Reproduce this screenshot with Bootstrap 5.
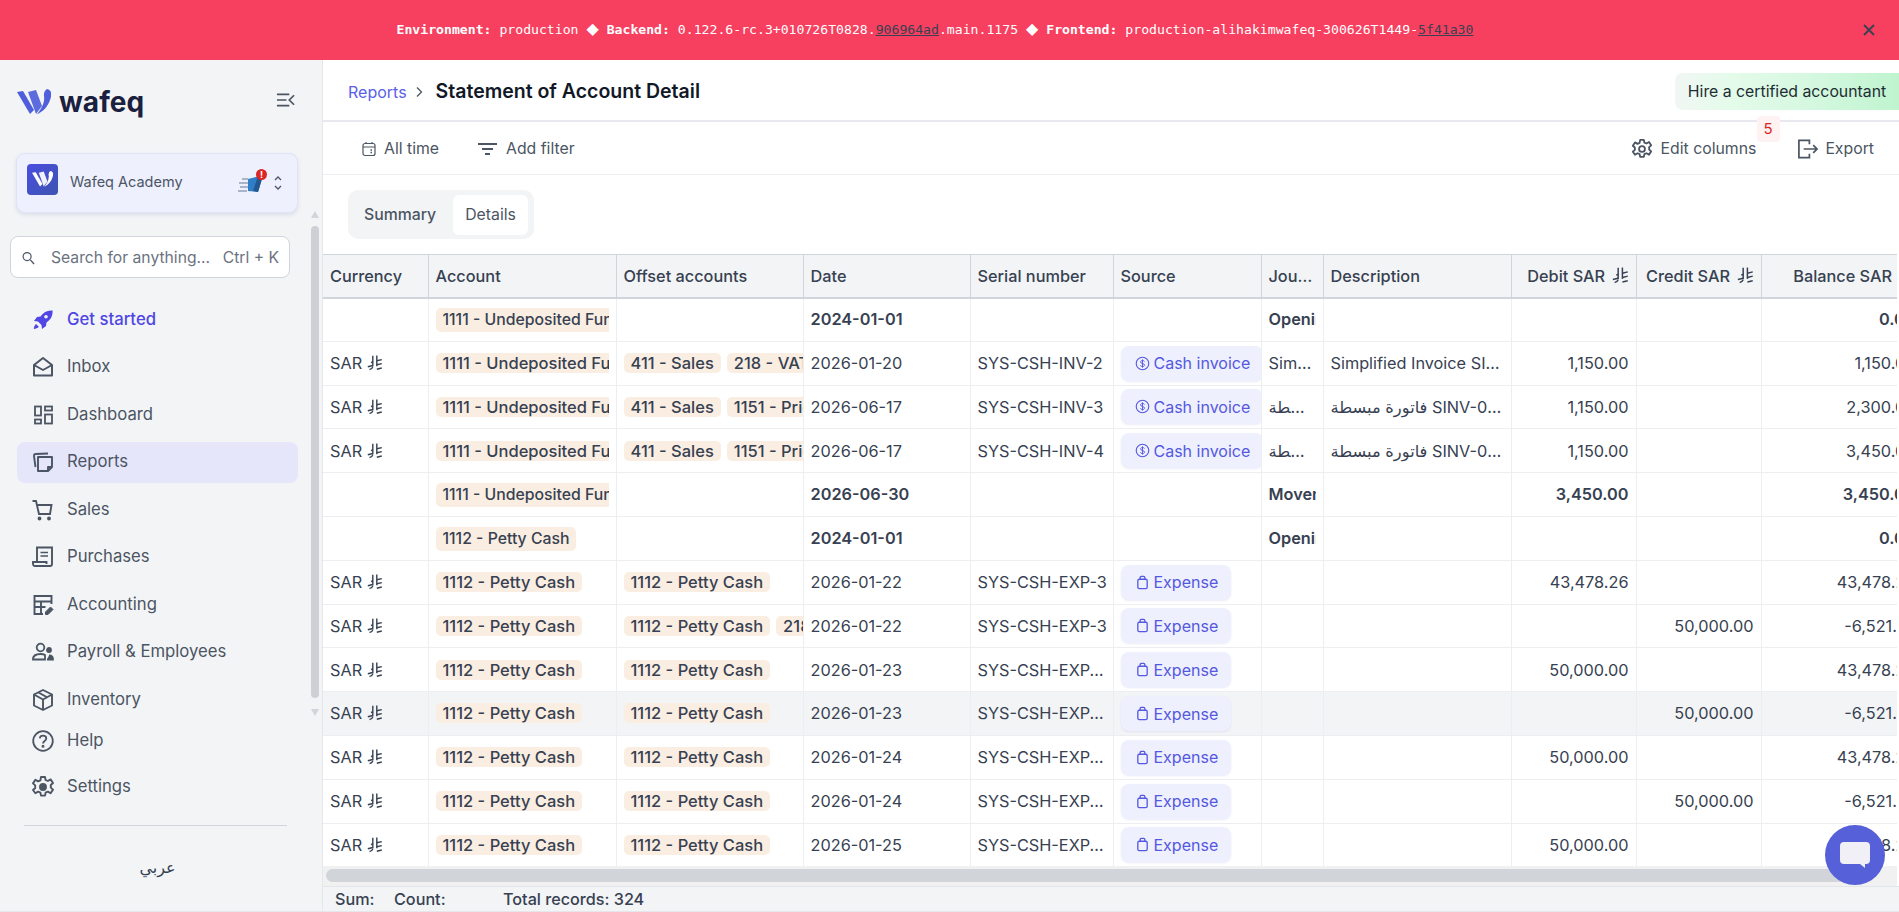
<!DOCTYPE html>
<html lang="en">
<head>
  <meta charset="UTF-8">
  <meta name="viewport" content="width=device-width, initial-scale=1.0">
  <title>Statement of Account Detail - wafeq</title>
  <link href="https://cdn.jsdelivr.net/npm/bootstrap@5.3.3/dist/css/bootstrap.min.css" rel="stylesheet" />
  <style>
    html, body { height: 100%; overflow: hidden; }
    body { font-family: Inter, "DejaVu Sans", sans-serif; color: #374151; background: #fff; }
    .env-bar { height: 60px; padding-right: 29px; background: #f74060; color: #fff; font-family: "DejaVu Sans Mono", monospace; font-size: 13.15px; flex-shrink: 0; }
    .env-bar a { color: #374151; }
    .env-gem { font-family: "DejaVu Sans", sans-serif; font-size: 16px; line-height: 1; }
    .env-close { right: 24px; top: 24px; }
    .shell { height: 852px; }
    .side { width: 323px; flex-shrink: 0; background: #f3f4f6; border-right: 1px solid #e5e7eb; border-bottom: 1px solid #e5e7eb; }
    .brand { height: 93px; padding: 24px 27px 0 17px; }
    .brand-name { font-size: 28px; font-weight: 700; color: #1a2040; line-height: 36px; letter-spacing: .1px; }
    .org-card { width: 282px; height: 60px; margin-left: 16px; background: #eef0fe; border: 1px solid #dfe3f7; border-radius: 9px; box-shadow: 0 2px 4px rgba(60, 70, 160, .12); padding: 0 14px 0 10px; font-size: 14.5px; color: #4b5563; }
    .org-name { margin-top: -2px; }
    .org-logo { width: 31px; height: 31px; margin-top: -8px; border-radius: 4px; background: linear-gradient(135deg, #4a4de0, #3d55b0); margin-right: 12px; }
    .org-bird { margin-right: 9px; }
    .org-alert { width: 11px; height: 11px; right: -3px; top: -3px; background: #dc2626; color: #fff; font-size: 9px; line-height: 11px; font-weight: 700; }
    .search-box { width: 280px; height: 42px; margin: 23px 0 0 10px; padding: 1px 10px 0 11px; background: #fff; border: 1px solid #d1d5db; border-radius: 8px; font-size: 15.7px; color: #6b7280; }
    .side-nav { margin: 21px 0 0 17px; width: 281px; }
    .side-link { height: 41px; margin-bottom: 6.5px; padding-left: 14px; border-radius: 8px; color: #4b5563; font-size: 16.7px; text-decoration: none; gap: 12px; }
    .side-link svg { width: 24px; height: 24px; flex-shrink: 0; }
    .side-link.is-start { color: #4f46e5; font-weight: 500; }
    .side-link.is-active { background: #e6e6fb; }
    .side-link.is-help { margin-top: -6.5px; margin-bottom: 5px; }
    .side-rule { margin: 18px 0 0 7px; width: 263px; border-top: 1px solid #d1d5db; opacity: 1; }
    .lang-link { margin-top: 29px; width: 281px; font-size: 16px; color: #374151; }
    .fake-scroll { right: 3px; top: 151px; width: 8px; }
    .fake-thumb { height: 472px; width: 8px; background: #cdd0d5; border-radius: 4px; }
    .tri-up { border-left: 4px solid transparent; border-right: 4px solid transparent; border-bottom: 7px solid #d1d5db; margin-bottom: 8px; }
    .tri-down { border-left: 4px solid transparent; border-right: 4px solid transparent; border-top: 7px solid #d1d5db; margin-top: 11px; }
    .main-col { min-width: 0; }
    .top-row { height: 62px; padding-left: 25px; border-bottom: 2px solid #e8e9f0; flex-shrink: 0; }
    .crumb-group { padding-top: 4px; }
    .crumb { color: #5b5fe8; font-size: 16px; text-decoration: none; }
    .page-title { font-size: 19.5px; font-weight: 600; color: #111827; margin: 0 0 0 5px; }
    .hire-btn { height: 37px; width: 224px; margin-top: 3px; border-radius: 8px 0 0 8px; background: linear-gradient(90deg, #f1f7f3, #e4fbea 25%, #d5f8e0 60%, #bff4cf); color: #1f2d33; font-size: 15.8px; }
    .tool-row { height: 53px; padding: 2px 25px 0 39px; border-bottom: 1px solid #eceef1; flex-shrink: 0; font-size: 15.8px; color: #4b5563; }
    .tool-row svg { flex-shrink: 0; }
    .tool-filter { margin: 0 9px 0 39px; }
    .tool-gear { margin-right: 8px; }
    .tool-export { margin: 0 7px 0 41px; }
    .col-count { top: -21px; left: 96px; width: 23px; height: 26px; background: #fef2f2; color: #dc2626; border-radius: 4px; font-size: 15px; }
    .tab-wrap { padding: 15px 0 15px 25px; flex-shrink: 0; }
    .seg { height: 49px; width: 186px; background: #f3f4f6; border-radius: 10px; padding: 5px 5px 4px 5px; font-size: 15.8px; color: #4b5563; font-weight: 500; }
    .seg span { padding: 0 11px; line-height: 40px; }
    .seg .seg-on { background: #fff; border-radius: 6px; padding: 0 12px; margin-left: 6px; font-weight: 400; }
    .grid-wrap { flex: 1 1 0; min-height: 0; overflow: hidden; margin-right: 2px; border-top: 1px solid #d1d5db; }
    .ledger { table-layout: fixed; width: 1600px; margin: 0; font-size: 16.3px; color: #374151; border-collapse: collapse; }
    .ledger th, .ledger td { height: 43.8px; padding: 0 7px; border: 0; border-right: 1px solid #eceef1; border-bottom: 1px solid #eceef1; white-space: nowrap; overflow: hidden; text-overflow: ellipsis; vertical-align: middle; color: #374151; background: transparent; box-shadow: none; }
    .ledger th { height: 42.5px; background: #f3f4f6; font-weight: 500; border-right-color: #d1d5db; border-bottom: 2px solid #d1d5db; }
    .ledger .clip { text-overflow: clip; }
    .ledger .flush { padding-right: 0; }
    .ledger .src-cell { padding-right: 0; text-overflow: clip; }
    .ledger .jrnl-head { padding-right: 4px; }
    .ledger tr.sum-row td { font-weight: 600; }
    .ledger tr.hovered td { background: #f3f4f6; }
    .ledger .num { text-align: right; }
    .ledger th .riyal { width: 17px; height: 17px; margin-left: 2px; }
    .cell-clip { overflow: hidden; white-space: nowrap; }
    .acct { display: inline-block; background: #faeee3; border-radius: 5px; padding: 0 7px; line-height: 20px; font-size: 16.5px; font-weight: 500; vertical-align: baseline; }
    .ledger .sum-row .acct { line-height: 24px; font-size: 15.8px; font-weight: 500; }
    .acct + .acct { margin-left: 6px; }
    .src-tag { display: inline-flex; align-items: center; gap: 4px; height: 35px; padding: 0 13px 0 14px; background: #eef0fe; color: #5558e0; border-radius: 8px; box-shadow: 0 1px 2px rgba(80, 90, 200, .12); vertical-align: middle; font-size: 16px; }
    .src-tag svg { width: 15px; height: 15px; }
    .riyal { width: 16px; height: 16px; vertical-align: -2px; }
    .h-scroll { height: 20px; margin-right: 2px; background: #f1f1f1; padding: 3px; flex-shrink: 0; }
    .h-thumb { height: 13px; background: #d1d4d9; border-radius: 7px; }
    .sum-bar { height: 26px; background: #f3f4f6; border-top: 1px solid #e2e5ea; border-bottom: 1px solid #e5e7eb; padding-left: 12px; font-size: 16.2px; font-weight: 500; color: #374151; flex-shrink: 0; }
    .sum-bar .sum-a { width: 59px; }
    .sum-bar .sum-b { width: 109px; }
    .chat-btn { right: 14px; bottom: 27px; width: 60px; height: 60px; background: #5660d8; }
  </style>
</head>
<body class="d-flex flex-column">

<!-- icons -->
<svg width="0" height="0" class="position-absolute">
  <symbol id="i-riyal" viewBox="0 0 16 16">
    <g fill="none" stroke="currentColor" stroke-width="1.400">
      <path d="M5.800 .8v10.700"/><path d="M9.800 .5v10.700"/><path d="M9.800 5.800l5-1.200"/><path d="M.8 11.800 5.800 10.500"/><path d="M9.800 9.800l5-1.200"/><path d="M2.500 14.500c2-.2 2.700-1 3.300-2.500"/><path d="M9.800 14.200l5-1.200"/><path d="M4 7.500 6 7"/>
    </g>
  </symbol>
  <symbol id="i-expense" viewBox="0 0 16 16">
    <g fill="none" stroke="currentColor" stroke-width="1.400" stroke-linejoin="round">
      <rect x="3" y="4.500" width="10" height="10" rx="1.500"/><path d="M5.500 4.500V2.800C5.500 2 6 1.500 6.800 1.500h2.400c.8 0 1.300.5 1.300 1.300v1.700"/>
    </g>
  </symbol>
  <symbol id="i-cash" viewBox="0 0 16 16">
    <circle cx="8" cy="8" r="6.700" fill="none" stroke="currentColor" stroke-width="1.200"/>
    <path d="M10 6c-.3-.9-1-1.300-2-1.300s-2 .6-2 1.600c0 2.300 4.100 1.100 4.100 3.400 0 1-.9 1.600-2.100 1.600s-1.900-.5-2.200-1.400M8 3.600v8.800" fill="none" stroke="currentColor" stroke-width="1"/>
  </symbol>
  <symbol id="i-mark" viewBox="0 0 34 26">
    <path d="M0 3 6 2 17 21 13 25Z"/><path d="M11 3 19 1 25 17 19 25Z" opacity=".92"/><path d="M30 0C35 1 35 6 33 11 31 17 27 22 20 25.500 25 19 28 13 27 7 26.500 4 28 1 30 0Z"/>
  </symbol>
</svg>

<!-- Env banner -->
<div class="env-bar position-relative d-flex align-items-center justify-content-center">
  <div><b>Environment:</b> production <span class="env-gem">◆</span> <b>Backend:</b> 0.122.6-rc.3+010726T0828.<a href="#">906964ad</a>.main.1175 <span class="env-gem">◆</span> <b>Frontend:</b> production-alihakimwafeq-300626T1449-<a href="#">5f41a30</a></div>
  <svg class="position-absolute env-close" width="12" height="12" viewBox="0 0 12 12"><path d="M1 1l10 10M11 1 1 11" stroke="#374151" stroke-width="1.800"/></svg>
</div>

<div class="shell d-flex">
  <!-- Sidebar -->
  <aside class="side position-relative">
    <div class="brand d-flex align-items-start justify-content-between">
      <div class="d-flex align-items-center" style="gap:8px">
        <svg width="34" height="26" fill="#4f5fdc"><use href="#i-mark"/></svg>
        <span class="brand-name">wafeq</span>
      </div>
      <svg class="mt-2" width="19" height="16" viewBox="0 0 20 16"><path d="M1 2h13M1 8h10M1 14h13M19 3l-5 5 5 5" fill="none" stroke="#4b5563" stroke-width="1.800"/></svg>
    </div>
    <div class="org-card d-flex align-items-center">
      <span class="org-logo d-flex align-items-center justify-content-center">
        <svg width="21" height="16" viewBox="0 0 34 26" fill="#fff"><use href="#i-mark"/></svg>
      </span>
      <span class="org-name flex-grow-1">Wafeq Academy</span>
      <span class="org-bird position-relative d-inline-flex">
        <svg width="26" height="22" viewBox="0 0 26 22"><path d="M10 7l12-3 2 3-4 13-10-1Z" fill="#2f7ec7"/><path d="M20 4l4 3-4 13-5-1Z" fill="#24568f"/><path d="M4 7h6M1 11h9M2 15h8M0 19h9" stroke="#a9b4c9" stroke-width="1.800"/></svg>
        <span class="org-alert position-absolute rounded-circle text-center">!</span>
      </span>
      <svg width="10" height="18" viewBox="0 0 10 18"><path d="M2 6l3-3 3 3M2 12l3 3 3-3" fill="none" stroke="#4b5563" stroke-width="1.300"/></svg>
    </div>
    <div class="search-box d-flex align-items-center">
      <svg class="me-3" width="13" height="14" viewBox="0 0 14 14"><circle cx="5.500" cy="5.500" r="4.300" fill="none" stroke="#4b5563" stroke-width="1.300"/><path d="M9 9l4 4.500" stroke="#4b5563" stroke-width="1.500"/></svg>
      <span class="flex-grow-1">Search for anything...</span>
      <span>Ctrl + K</span>
    </div>
    <nav class="side-nav">
      <a href="#" class="side-link is-start d-flex align-items-center">
        <svg viewBox="0 0 24 24" fill="#4f46e5"><path d="M21.500 2.500c-5-.5-9 1.500-12 6L6 9l-3 4 4 .5L10.500 17l.5 4 4-3 .5-3.500c4.500-3 6.500-7 6-12.500ZM15 10.500a1.800 1.800 0 1 1 0-3.600 1.800 1.800 0 0 1 0 3.600ZM5 16c-1.500 1-2 3-2.200 5 2-.2 4-.7 5-2.200Z"/></svg>
        Get started
      </a>
      <a href="#" class="side-link d-flex align-items-center">
        <svg viewBox="0 0 24 24" fill="none" stroke="#4b5563" stroke-width="2" stroke-linejoin="round"><path d="M3 10v10.500h18V10L12 3Z"/><path d="M3 10l9 5 9-5"/></svg>
        Inbox
      </a>
      <a href="#" class="side-link d-flex align-items-center">
        <svg viewBox="0 0 24 24" fill="none" stroke="#4b5563" stroke-width="1.800"><rect x="4" y="3.500" width="6" height="9"/><rect x="14" y="3.500" width="7" height="4"/><rect x="4" y="16.500" width="6" height="4"/><rect x="14" y="11.500" width="7" height="9"/></svg>
        Dashboard
      </a>
      <a href="#" class="side-link is-active d-flex align-items-center">
        <svg viewBox="0 0 24 24" fill="none" stroke="#4b5563" stroke-width="1.900" stroke-linejoin="round"><path d="M7 7h14v10l-4 4H7Z"/><path d="M17 21v-4h4"/><path d="M4.500 17 3 6c0-1 .5-2 1.500-2L17 3.500"/></svg>
        Reports
      </a>
      <a href="#" class="side-link d-flex align-items-center">
        <svg viewBox="0 0 24 24" fill="none" stroke="#4b5563" stroke-width="1.900"><path d="M1.500 3H5l3 13h11l1.500-9H6"/><circle cx="8.500" cy="20.500" r="1" fill="#4b5563"/><circle cx="18" cy="20.500" r="1" fill="#4b5563"/></svg>
        Sales
      </a>
      <a href="#" class="side-link d-flex align-items-center">
        <svg viewBox="0 0 24 24" fill="none" stroke="#4b5563" stroke-width="1.900"><path d="M6 17V2.500h15V19c0 1-.7 2-2 2H4c-1.300 0-2-1-2-2v-2h13.500v2"/><path d="M9.500 7.500H17M9.500 11H17" stroke-width="1.500"/></svg>
        Purchases
      </a>
      <a href="#" class="side-link d-flex align-items-center">
        <svg viewBox="0 0 24 24" fill="none" stroke="#4b5563" stroke-width="1.900"><path d="M12 21H3.500V3h17v8"/><path d="M3.500 8.500h17M3.500 14h11M10 8.500V21"/><path d="M14.500 21.500v-2.500l5-5 2.500 2.500-5 5Z" fill="#4b5563" stroke-width="1"/></svg>
        Accounting
      </a>
      <a href="#" class="side-link d-flex align-items-center">
        <svg viewBox="0 0 24 24" fill="none" stroke="#4b5563" stroke-width="1.800"><circle cx="9.500" cy="7.500" r="3.800"/><path d="M2 19.500c0-4 3.500-5.500 7.500-5.500 2 0 3.500.3 4.500 1v4.500Z"/><circle cx="18" cy="10" r="2" fill="#4b5563"/><path d="M16 19.500h6c0-2.500-1.500-4-4-4" fill="#4b5563"/></svg>
        Payroll &amp; Employees
      </a>
      <a href="#" class="side-link d-flex align-items-center">
        <svg viewBox="0 0 24 24" fill="none" stroke="#4b5563" stroke-width="1.900" stroke-linejoin="round"><path d="M12 2 3 6.500v11L12 22l9-4.500v-11Z"/><path d="M3 6.500l9 5 9-5M12 11.500V22M7.500 4.500l9 5"/></svg>
        Inventory
      </a>
      <a href="#" class="side-link is-help d-flex align-items-center">
        <svg viewBox="0 0 24 24" fill="none" stroke="#4b5563" stroke-width="1.800"><circle cx="12" cy="12" r="9.800"/><path d="M8.800 9.300C9 7.500 10.300 6.700 12 6.700c1.900 0 3.300 1.100 3.300 2.800 0 2.400-3.300 2.500-3.300 5"/><circle cx="12" cy="17.300" r=".6" fill="#4b5563"/></svg>
        Help
      </a>
      <a href="#" class="side-link d-flex align-items-center">
        <svg viewBox="0 0 24 24" fill="none" stroke="#4b5563" stroke-width="1.900" stroke-linejoin="round"><path d="M10 2h4l.6 3 2.300 1 2.700-1.600 2.400 3.600-2.200 2v2.600l2.200 2-2.400 3.600-2.700-1.600-2.300 1-.6 3h-4l-.6-3-2.300-1-2.700 1.600L2 15l2.200-2v-2.600L2 8.400 4.400 4.800 7.100 6.400l2.300-1Z"/><circle cx="12" cy="12" r="3" fill="#4b5563"/></svg>
        Settings
      </a>
      <hr class="side-rule">
      <div class="lang-link text-center">عربي</div>
    </nav>
    <div class="fake-scroll position-absolute d-flex flex-column align-items-center">
      <div class="tri-up"></div>
      <div class="fake-thumb"></div>
      <div class="tri-down"></div>
    </div>
  </aside>

  <!-- Main Content -->
  <main class="main-col flex-grow-1 d-flex flex-column">
    <div class="top-row d-flex align-items-center justify-content-between">
      <div class="crumb-group d-flex align-items-center">
        <a href="#" class="crumb">Reports</a>
        <svg class="mx-2" width="8" height="12" viewBox="0 0 8 12"><path d="M2 1.500 6.500 6 2 10.500" fill="none" stroke="#4b5563" stroke-width="1.300"/></svg>
        <h1 class="page-title">Statement of Account Detail</h1>
      </div>
      <div class="hire-btn d-flex align-items-center justify-content-center">Hire a certified accountant</div>
    </div>

    <div class="tool-row d-flex align-items-center justify-content-between">
      <div class="d-flex align-items-center">
        <svg class="me-2" width="14" height="16" viewBox="0 0 14 16" fill="none" stroke="#4b5563" stroke-width="1.200"><rect x="1" y="2.500" width="12" height="12" rx="2"/><path d="M1 6h12M4 1v2M10 1v2"/><path d="M8.500 9h1.500M8.500 11.500h1.500" stroke-width="1.400"/></svg>
        <span>All time</span>
        <svg class="tool-filter" width="19" height="14" viewBox="0 0 19 14"><path d="M0 2h19M4 7h11M7 12h5" stroke="#4b5563" stroke-width="1.800"/></svg>
        <span>Add filter</span>
      </div>
      <div class="d-flex align-items-center">
        <svg class="tool-gear" width="22" height="24" viewBox="0 0 24 24" fill="none" stroke="#4b5563" stroke-width="2" stroke-linejoin="round"><path d="M10 2h4l.6 3 2.300 1 2.700-1.600 2.400 3.600-2.200 2v2.600l2.200 2-2.400 3.600-2.700-1.600-2.300 1-.6 3h-4l-.6-3-2.300-1-2.700 1.600L2 15l2.200-2v-2.600L2 8.400 4.400 4.800 7.100 6.400l2.300-1Z"/><circle cx="12" cy="12" r="3.200"/></svg>
        <span class="position-relative">Edit columns<span class="col-count position-absolute d-flex align-items-center justify-content-center">5</span></span>
        <svg class="tool-export" width="21" height="22" viewBox="0 0 22 22" fill="none" stroke="#4b5563" stroke-width="1.800"><path d="M13 6V2H2v18h11v-4"/><path d="M7 11h14M17 7l4 4-4 4"/></svg>
        <span>Export</span>
      </div>
    </div>

    <div class="tab-wrap">
      <div class="seg d-flex">
        <span>Summary</span>
        <span class="seg-on">Details</span>
      </div>
    </div>

    <div class="grid-wrap">
      <table class="table ledger">
        <colgroup>
          <col style="width:105px"><col style="width:188px"><col style="width:187px"><col style="width:167px"><col style="width:143px"><col style="width:148px"><col style="width:62px"><col style="width:188px"><col style="width:125px"><col style="width:125px"><col style="width:162px">
        </colgroup>
        <thead>
          <tr>
            <th>Currency</th><th>Account</th><th>Offset accounts</th><th>Date</th><th>Serial number</th><th>Source</th><th class="jrnl-head">Journal</th><th>Description</th>
            <th class="num">Debit SAR <svg class="riyal"><use href="#i-riyal"/></svg></th>
            <th class="num">Credit SAR <svg class="riyal"><use href="#i-riyal"/></svg></th>
            <th class="num">Balance SAR <svg class="riyal"><use href="#i-riyal"/></svg></th>
          </tr>
        </thead>
        <tbody>
          <tr class="sum-row"><td></td><td><div class="cell-clip"><span class="acct">1111 - Undeposited Funds</span></div></td><td></td><td>2024-01-01</td><td></td><td></td><td><div class="cell-clip">Opening balance</div></td><td></td><td></td><td></td><td class="num">0.00</td></tr>
          <tr><td>SAR <svg class="riyal"><use href="#i-riyal"/></svg></td><td><div class="cell-clip"><span class="acct">1111 - Undeposited Funds</span></div></td><td class="clip flush"><span class="acct">411 - Sales</span><span class="acct">218 - VAT</span></td><td>2026-01-20</td><td>SYS-CSH-INV-2</td><td class="src-cell"><span class="src-tag"><svg><use href="#i-cash"/></svg>Cash invoice</span></td><td>Simplified</td><td>Simplified Invoice SINV-00001</td><td class="num">1,150.00</td><td></td><td class="num">1,150.00</td></tr>
          <tr><td>SAR <svg class="riyal"><use href="#i-riyal"/></svg></td><td><div class="cell-clip"><span class="acct">1111 - Undeposited Funds</span></div></td><td class="clip flush"><span class="acct">411 - Sales</span><span class="acct">1151 - Prices</span></td><td>2026-06-17</td><td>SYS-CSH-INV-3</td><td class="src-cell"><span class="src-tag"><svg><use href="#i-cash"/></svg>Cash invoice</span></td><td>فاتورة مبسطة</td><td>فاتورة مبسطة SINV-00002</td><td class="num">1,150.00</td><td></td><td class="num">2,300.00</td></tr>
          <tr><td>SAR <svg class="riyal"><use href="#i-riyal"/></svg></td><td><div class="cell-clip"><span class="acct">1111 - Undeposited Funds</span></div></td><td class="clip flush"><span class="acct">411 - Sales</span><span class="acct">1151 - Prices</span></td><td>2026-06-17</td><td>SYS-CSH-INV-4</td><td class="src-cell"><span class="src-tag"><svg><use href="#i-cash"/></svg>Cash invoice</span></td><td>فاتورة مبسطة</td><td>فاتورة مبسطة SINV-00003</td><td class="num">1,150.00</td><td></td><td class="num">3,450.00</td></tr>
          <tr class="sum-row"><td></td><td><div class="cell-clip"><span class="acct">1111 - Undeposited Funds</span></div></td><td></td><td>2026-06-30</td><td></td><td></td><td><div class="cell-clip">Movement</div></td><td></td><td class="num">3,450.00</td><td></td><td class="num">3,450.00</td></tr>
          <tr class="sum-row"><td></td><td><div class="cell-clip"><span class="acct">1112 - Petty Cash</span></div></td><td></td><td>2024-01-01</td><td></td><td></td><td><div class="cell-clip">Opening balance</div></td><td></td><td></td><td></td><td class="num">0.00</td></tr>
          <tr><td>SAR <svg class="riyal"><use href="#i-riyal"/></svg></td><td><span class="acct">1112 - Petty Cash</span></td><td class="clip flush"><span class="acct">1112 - Petty Cash</span></td><td>2026-01-22</td><td class="clip flush">SYS-CSH-EXP-3</td><td class="src-cell"><span class="src-tag"><svg><use href="#i-expense"/></svg>Expense</span></td><td></td><td></td><td class="num">43,478.26</td><td></td><td class="num">43,478.26</td></tr>
          <tr><td>SAR <svg class="riyal"><use href="#i-riyal"/></svg></td><td><span class="acct">1112 - Petty Cash</span></td><td class="clip flush"><span class="acct">1112 - Petty Cash</span><span class="acct">218 - VAT</span></td><td>2026-01-22</td><td class="clip flush">SYS-CSH-EXP-3</td><td class="src-cell"><span class="src-tag"><svg><use href="#i-expense"/></svg>Expense</span></td><td></td><td></td><td></td><td class="num">50,000.00</td><td class="num">-6,521.74</td></tr>
          <tr><td>SAR <svg class="riyal"><use href="#i-riyal"/></svg></td><td><span class="acct">1112 - Petty Cash</span></td><td class="clip flush"><span class="acct">1112 - Petty Cash</span></td><td>2026-01-23</td><td>SYS-CSH-EXP-40</td><td class="src-cell"><span class="src-tag"><svg><use href="#i-expense"/></svg>Expense</span></td><td></td><td></td><td class="num">50,000.00</td><td></td><td class="num">43,478.26</td></tr>
          <tr class="hovered"><td>SAR <svg class="riyal"><use href="#i-riyal"/></svg></td><td><span class="acct">1112 - Petty Cash</span></td><td class="clip flush"><span class="acct">1112 - Petty Cash</span></td><td>2026-01-23</td><td>SYS-CSH-EXP-40</td><td class="src-cell"><span class="src-tag"><svg><use href="#i-expense"/></svg>Expense</span></td><td></td><td></td><td></td><td class="num">50,000.00</td><td class="num">-6,521.74</td></tr>
          <tr><td>SAR <svg class="riyal"><use href="#i-riyal"/></svg></td><td><span class="acct">1112 - Petty Cash</span></td><td class="clip flush"><span class="acct">1112 - Petty Cash</span></td><td>2026-01-24</td><td>SYS-CSH-EXP-41</td><td class="src-cell"><span class="src-tag"><svg><use href="#i-expense"/></svg>Expense</span></td><td></td><td></td><td class="num">50,000.00</td><td></td><td class="num">43,478.26</td></tr>
          <tr><td>SAR <svg class="riyal"><use href="#i-riyal"/></svg></td><td><span class="acct">1112 - Petty Cash</span></td><td class="clip flush"><span class="acct">1112 - Petty Cash</span></td><td>2026-01-24</td><td>SYS-CSH-EXP-41</td><td class="src-cell"><span class="src-tag"><svg><use href="#i-expense"/></svg>Expense</span></td><td></td><td></td><td></td><td class="num">50,000.00</td><td class="num">-6,521.74</td></tr>
          <tr><td>SAR <svg class="riyal"><use href="#i-riyal"/></svg></td><td><span class="acct">1112 - Petty Cash</span></td><td class="clip flush"><span class="acct">1112 - Petty Cash</span></td><td>2026-01-25</td><td>SYS-CSH-EXP-42</td><td class="src-cell"><span class="src-tag"><svg><use href="#i-expense"/></svg>Expense</span></td><td></td><td></td><td class="num">50,000.00</td><td></td><td class="num">43,478.26</td></tr>
        </tbody>
      </table>
    </div>
    <div class="h-scroll"><div class="h-thumb" style="width:1548px"></div></div>

    <div class="sum-bar d-flex align-items-center">
      <span class="sum-a">Sum:</span><span class="sum-b">Count:</span><span>Total records: 324</span>
    </div>
  </main>
</div>

<!-- Chat launcher -->
<div class="chat-btn position-fixed rounded-circle d-flex align-items-center justify-content-center">
  <svg width="32" height="28" viewBox="0 0 32 28"><path d="M5 1h22a4 4 0 0 1 4 4v14a4 4 0 0 1-4 4h-1v4l-5-4H5a4 4 0 0 1-4-4V5a4 4 0 0 1 4-4Z" fill="#f0f0f6"/></svg>
</div>

<script src="https://cdn.jsdelivr.net/npm/bootstrap@5.3.3/dist/js/bootstrap.bundle.min.js"></script>
</body>
</html>
